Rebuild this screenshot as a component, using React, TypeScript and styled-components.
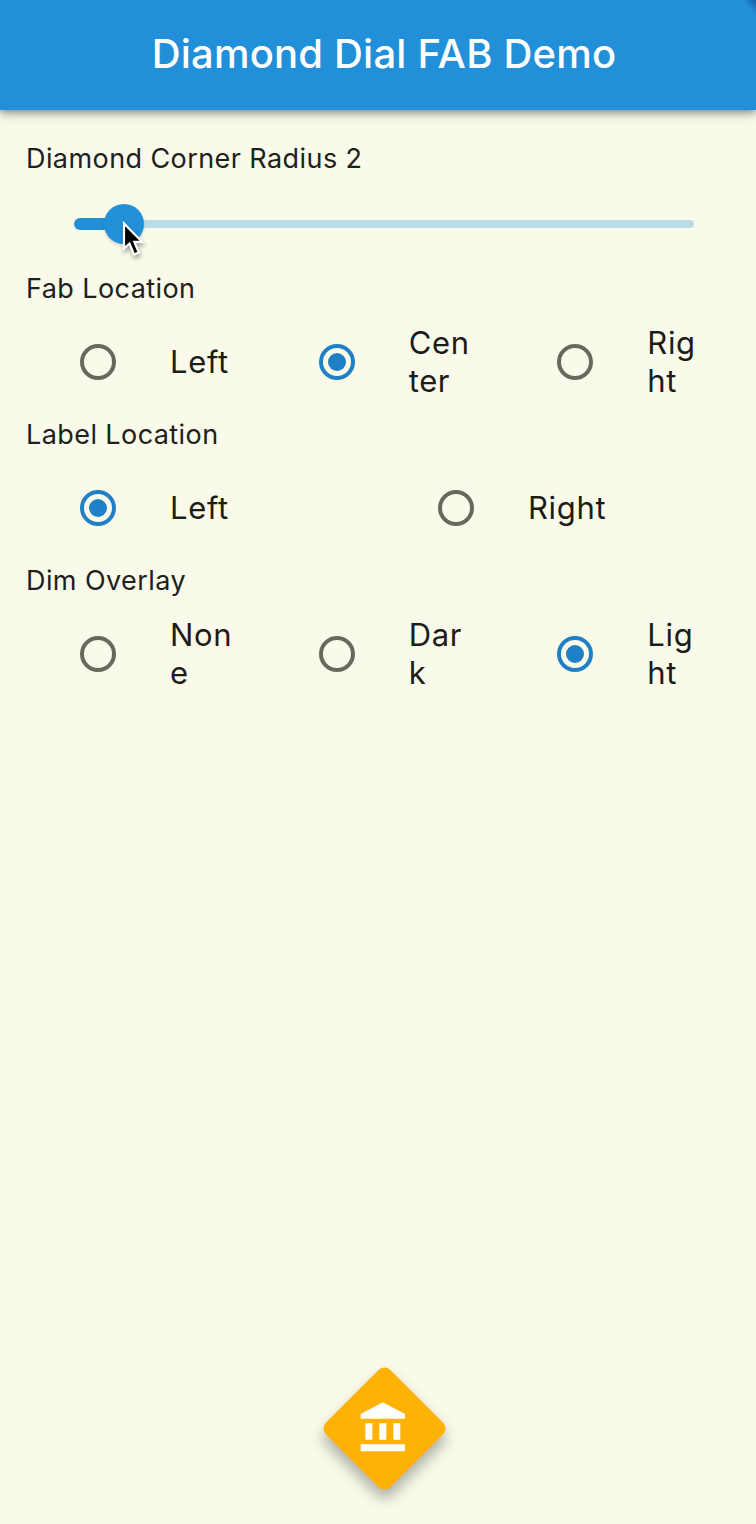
import React, { useState } from "react";
import styled, { createGlobalStyle } from "styled-components";

const GlobalStyle = createGlobalStyle`
  * { box-sizing: border-box; }
  body {
    margin: 0;
    background: #fafaea;
    font-family: Inter, "Liberation Sans", sans-serif;
  }
`;

const Screen = styled.div`
  width: 756px;
  height: 1524px;
  display: flex;
  flex-direction: column;
  background: #fafaea;
  overflow: hidden;
`;

const AppBar = styled.header`
  position: relative;
  flex: none;
  height: 110px;
  padding: 0 0 2px 12px;
  display: flex;
  align-items: center;
  justify-content: center;
  background: #2190d8;
  box-shadow: 0 2px 7px rgba(0, 0, 0, 0.38), 0 5px 12px rgba(0, 0, 0, 0.16);
`;

const BarCorner = styled.span`
  position: absolute;
  top: 0;
  right: 0;
  width: 15px;
  height: 15px;
  background: linear-gradient(to top right, transparent 50%, rgba(15, 50, 120, 0.55) 100%);
`;

const Title = styled.h1`
  margin: 0;
  font-size: 40px;
  line-height: 48px;
  font-weight: 500;
  letter-spacing: 0.2px;
  color: #fff;
  white-space: nowrap;
`;

const Settings = styled.main`
  flex: 1;
  padding: 32px 14px 0 26px;
`;

const SectionLabel = styled.div`
  height: 34px;
  line-height: 34px;
  font-size: 27px;
  letter-spacing: 0.42px;
  color: #20201c;
  white-space: nowrap;
`;

const SliderRow = styled.div`
  position: relative;
  height: 96px;
  padding: 0 48px;
  display: flex;
  align-items: center;
`;

const ActiveTrack = styled.div`
  width: 40px;
  height: 12px;
  border-radius: 6px 0 0 6px;
  background: #2190d8;
`;

const Thumb = styled.div`
  flex: none;
  width: 40px;
  height: 40px;
  margin: 0 -2px 0 -10px;
  border-radius: 50%;
  background: #2190d8;
  box-shadow: 0 2px 3px rgba(0, 0, 0, 0.14);
  z-index: 1;
`;

const InactiveTrack = styled.div`
  flex: 1;
  height: 8px;
  border-radius: 0 4px 4px 0;
  background: #b9dce6;
`;

const Pointer = styled.svg`
  position: absolute;
  left: 94px;
  top: 44px;
  z-index: 2;
  filter: drop-shadow(1px 3px 2px rgba(0, 0, 0, 0.35));
`;

const Options = styled.div<{ $count: number }>`
  display: grid;
  grid-template-columns: repeat(${(p) => p.$count}, 1fr);
  height: 112px;
`;

const Option = styled.button`
  display: flex;
  align-items: center;
  gap: 54px;
  min-width: 0;
  padding: 0 32px 0 54px;
  border: 0;
  background: none;
  font: inherit;
  text-align: left;
  cursor: pointer;
`;

const Ring = styled.span<{ $on: boolean }>`
  flex: none;
  width: 36px;
  height: 36px;
  display: grid;
  place-items: center;
  border: 4px solid ${(p) => (p.$on ? "#1f80c6" : "#68685c")};
  border-radius: 50%;

  &::after {
    content: "";
    width: 18px;
    height: 18px;
    border-radius: 50%;
    background: ${(p) => (p.$on ? "#1f80c6" : "transparent")};
  }
`;

const OptionText = styled.span`
  flex: 1;
  min-width: 0;
  font-size: 31px;
  line-height: 38px;
  letter-spacing: 0.65px;
  color: #1c1c18;
  word-break: break-all;
`;

const Footer = styled.footer`
  flex: none;
  display: flex;
  justify-content: center;
  padding: 0 0 31px 12px;
`;

const Fab = styled.button`
  display: grid;
  place-items: center;
  width: 130px;
  height: 130px;
  padding: 0;
  border: 0;
  background: none;
  color: #fff;
  filter: drop-shadow(0 9px 7px rgba(0, 0, 0, 0.3));
  cursor: pointer;

  & > * {
    grid-area: 1 / 1;
  }
`;

const Diamond = styled.span`
  width: 91px;
  height: 91px;
  border-radius: 8px;
  background: #ffb206;
  transform: rotate(45deg);
`;

const FabIcon = styled.svg`
  z-index: 1;
`;

type GroupProps = { label: string; options: string[]; initial: number };

function RadioSection({ label, options, initial }: GroupProps) {
  const [selected, setSelected] = useState(initial);
  return (
    <section>
      <SectionLabel>{label}</SectionLabel>
      <Options $count={options.length} role="radiogroup" aria-label={label}>
        {options.map((name, i) => (
          <Option key={name} role="radio" aria-checked={i === selected} onClick={() => setSelected(i)}>
            <Ring $on={i === selected} />
            <OptionText>{name}</OptionText>
          </Option>
        ))}
      </Options>
    </section>
  );
}

export default function App() {
  return (
    <>
      <GlobalStyle />
      <Screen>
        <AppBar>
          <Title>Diamond Dial FAB Demo</Title>
          <BarCorner />
        </AppBar>
        <Settings>
          <SectionLabel>Diamond Corner Radius 2</SectionLabel>
          <SliderRow>
            <ActiveTrack />
            <Thumb />
            <InactiveTrack />
            <Pointer width="26" height="40" viewBox="0 0 26 40">
              <path
                d="M4 3.5V28.5L9.5 23.5L14 34.5L18.8 32.5L14.3 21.8H22Z"
                fill="#000"
                stroke="#fff"
                strokeWidth="2.2"
              />
            </Pointer>
          </SliderRow>
          <RadioSection label="Fab Location" options={["Left", "Center", "Right"]} initial={1} />
          <RadioSection label="Label Location" options={["Left", "Right"]} initial={0} />
          <RadioSection label="Dim Overlay" options={["None", "Dark", "Light"]} initial={2} />
        </Settings>
        <Footer>
          <Fab aria-label="Open dial">
            <Diamond />
            <FabIcon width="56" height="56" viewBox="0 0 24 24" fill="currentColor">
              <path d="M4 10v7h3v-7H4zm6 0v7h3v-7h-3zM2 22h19v-3H2v3zm14-12v7h3v-7h-3zm-4.5-9L2 6v2h19V6l-9.5-5z" />
            </FabIcon>
          </Fab>
        </Footer>
      </Screen>
    </>
  );
}
